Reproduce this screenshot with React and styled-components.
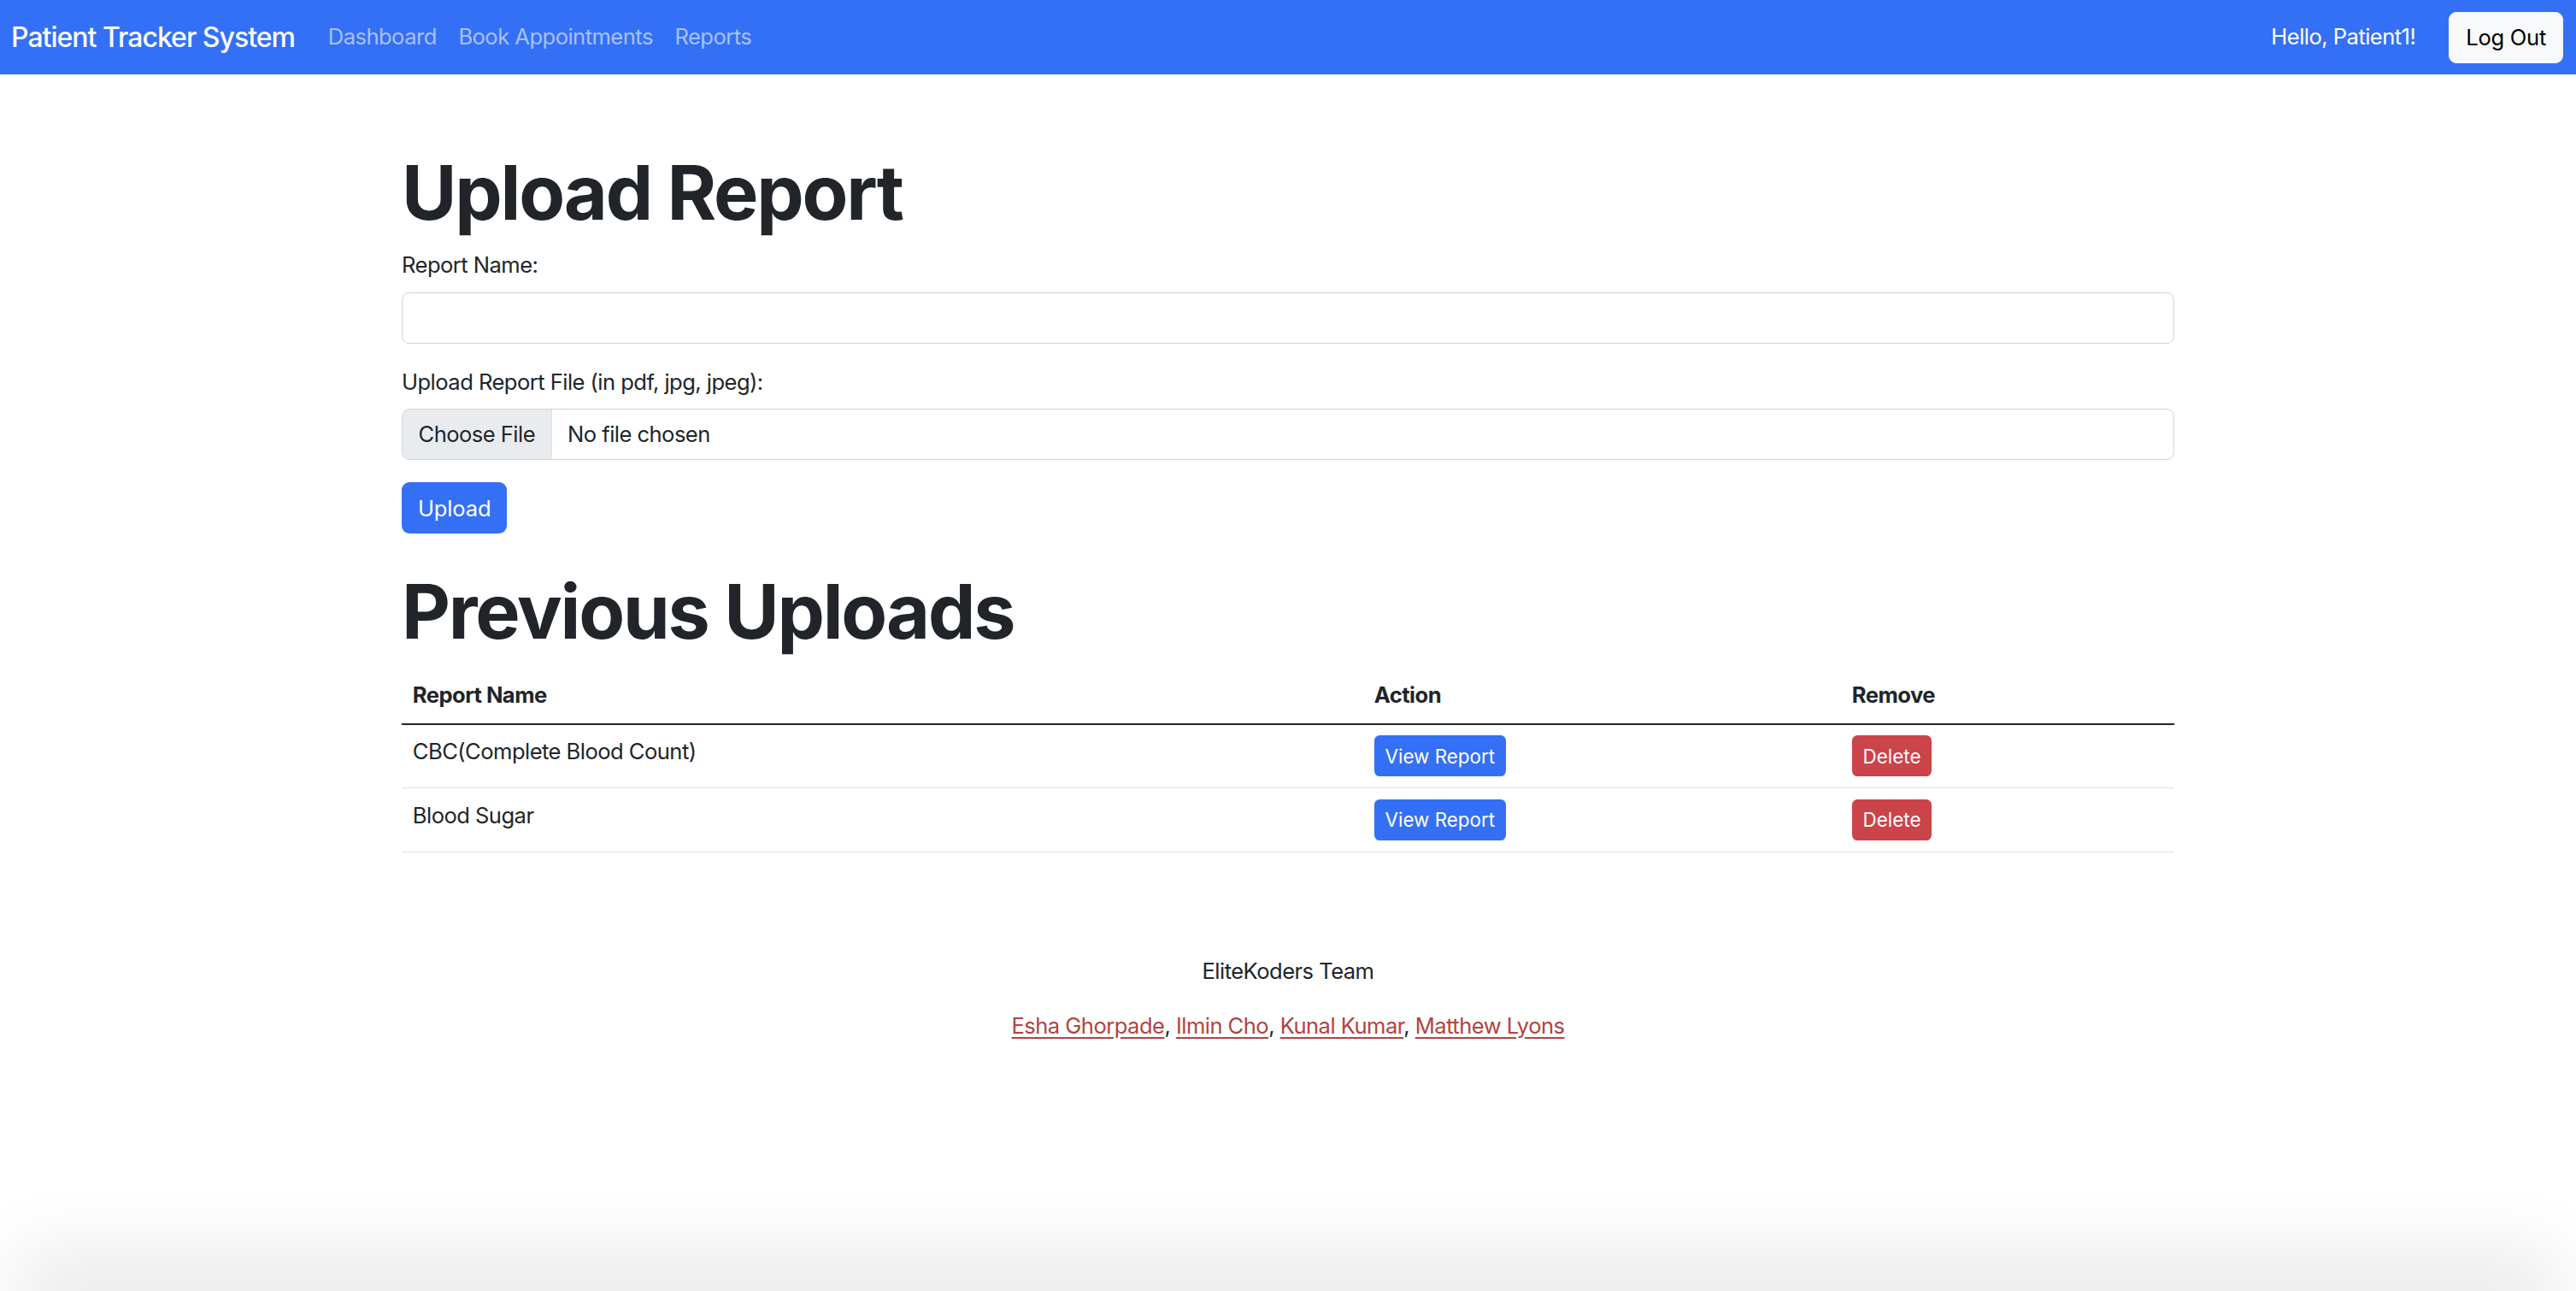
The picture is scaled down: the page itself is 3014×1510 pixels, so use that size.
import React from "react";
import styled, { createGlobalStyle } from "styled-components";

const GlobalStyle = createGlobalStyle`
  *, *::before, *::after { box-sizing: border-box; }
  html, body { margin: 0; padding: 0; background: #ffffff; }
  body {
    font-family: Inter, "Noto Sans", "Liberation Sans", sans-serif;
    font-size: 25.6px;
    line-height: 1.5;
    letter-spacing: -0.55px;
    color: #212529;
    overflow: hidden;
  }
`;

const Page = styled.div`
  min-height: 1510px;
  display: flex;
  flex-direction: column;
`;

const Navbar = styled.nav`
  height: 87px;
  background: #3470f5;
  display: flex;
  align-items: center;
  padding: 0 15px 0 13px;
`;

const Brand = styled.a`
  font-size: 32px;
  font-weight: 500;
  color: #ffffff;
  text-decoration: none;
  margin-right: 26px;
  letter-spacing: -1px;
`;

const NavLinks = styled.ul`
  display: flex;
  list-style: none;
  margin: 0;
  padding: 0;
  flex: 1;
`;

const NavLink = styled.a`
  display: block;
  padding: 0 12.8px;
  color: rgba(255, 255, 255, 0.58);
  text-decoration: none;
  font-size: 25.6px;
`;

const Greeting = styled.span`
  color: #ffffff;
  font-size: 25.6px;
  margin-right: 39px;
`;

const LightButton = styled.button`
  height: 60px;
  padding: 0 19px;
  font-family: inherit;
  font-size: 25.6px;
  letter-spacing: -0.3px;
  color: #000000;
  background: #f8f9fa;
  border: 1px solid #f8f9fa;
  border-radius: 9px;
`;

const Container = styled.main`
  width: 2074px;
  margin: 0 auto;
  padding-top: 86px;
`;

const Heading = styled.h1`
  margin: ${(p) => p.$top || 0}px 0 12.8px;
  font-size: 88px;
  font-weight: 700;
  line-height: 1.2;
  letter-spacing: -2.2px;
  color: #212529;
`;

const Field = styled.div`
  margin-bottom: 26px;
`;

const Label = styled.label`
  display: block;
  margin-bottom: 12px;
  font-size: 25.6px;
`;

const TextInput = styled.input`
  display: block;
  width: 100%;
  height: 60px;
  padding: 0 19px;
  font-family: inherit;
  font-size: 25.6px;
  border: 1px solid #ced4da;
  border-radius: 9px;
  background: #fff;
`;

const FileBox = styled.label`
  display: flex;
  align-items: stretch;
  height: 60px;
  border: 1px solid #ced4da;
  border-radius: 9px;
  overflow: hidden;
  font-size: 25.6px;
`;

const FileButton = styled.span`
  display: flex;
  align-items: center;
  padding: 0 18.5px;
  background: #e9ecef;
  border-right: 1px solid #dee2e6;
  color: #212529;
`;

const FileName = styled.span`
  display: flex;
  align-items: center;
  padding-left: 18.5px;
  color: #212529;
`;

const Button = styled.button`
  height: ${(p) => (p.$small ? 48 : 60)}px;
  padding: 0 ${(p) => (p.$small ? 12.8 : 19)}px;
  font-family: inherit;
  letter-spacing: ${(p) => (p.$small ? "0px" : "-0.2px")};
  font-size: ${(p) => (p.$small ? 22.4 : 25.6)}px;
  color: #ffffff;
  background: ${(p) => (p.$danger ? "#cb444a" : "#3470f5")};
  border: none;
  border-radius: ${(p) => (p.$small ? 6.4 : 9)}px;
`;

const Table = styled.table`
  width: 100%;
  border-collapse: collapse;
  margin-bottom: 25.6px;
`;

const Th = styled.th`
  width: ${(p) => p.$w}px;
  text-align: left;
  padding: 12.8px;
  font-weight: 700;
  font-size: 25.6px;
  border-bottom: 2px solid #212529;
`;

const Td = styled.td`
  padding: 12.8px;
  vertical-align: top;
  font-size: 25.6px;
  border-bottom: 1px solid #dee2e6;
`;

const Footer = styled.footer`
  margin-top: 120px;
  text-align: center;
`;

const FooterLine = styled.p`
  margin: 0 0 25.6px;
  font-size: 25.6px;
`;

const Member = styled.a`
  color: #b3433f;
  text-decoration: underline;
  text-underline-offset: 4px;
`;

const BottomShadow = styled.div`
  margin: auto 60px 0;
  height: 0;
  box-shadow: 0 0 90px 40px rgba(0, 0, 0, 0.1);
`;

const reports = ["CBC(Complete Blood Count)", "Blood Sugar"];
const members = ["Esha Ghorpade", "Ilmin Cho", "Kunal Kumar", "Matthew Lyons"];

export default function App() {
  return (
    <>
      <GlobalStyle />
      <Page>
        <Navbar>
          <Brand href="#">Patient Tracker System</Brand>
          <NavLinks>
            <li><NavLink href="#">Dashboard</NavLink></li>
            <li><NavLink href="#">Book Appointments</NavLink></li>
            <li><NavLink href="#">Reports</NavLink></li>
          </NavLinks>
          <Greeting>Hello, Patient1!</Greeting>
          <LightButton>Log Out</LightButton>
        </Navbar>

        <Container>
          <Heading>Upload Report</Heading>
          <Field>
            <Label htmlFor="rname">Report Name:</Label>
            <TextInput id="rname" type="text" />
          </Field>
          <Field>
            <Label>Upload Report File (in pdf, jpg, jpeg):</Label>
            <FileBox>
              <FileButton>Choose File</FileButton>
              <FileName>No file chosen</FileName>
            </FileBox>
          </Field>
          <Button>Upload</Button>

          <Heading $top={39}>Previous Uploads</Heading>
          <Table>
            <thead>
              <tr>
                <Th $w={1125}>Report Name</Th>
                <Th $w={559}>Action</Th>
                <Th $w={390}>Remove</Th>
              </tr>
            </thead>
            <tbody>
              {reports.map((r) => (
                <tr key={r}>
                  <Td>{r}</Td>
                  <Td><Button $small>View Report</Button></Td>
                  <Td><Button $small $danger>Delete</Button></Td>
                </tr>
              ))}
            </tbody>
          </Table>

          <Footer>
            <FooterLine>EliteKoders Team</FooterLine>
            <FooterLine>
              {members.map((m, i) => (
                <React.Fragment key={m}>
                  <Member href="#">{m}</Member>
                  {i < members.length - 1 ? ", " : ""}
                </React.Fragment>
              ))}
            </FooterLine>
          </Footer>
        </Container>
        <BottomShadow />
      </Page>
    </>
  );
}
